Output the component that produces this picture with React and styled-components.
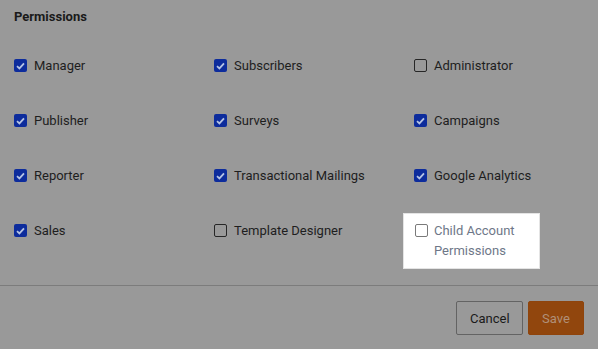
import React from "react";
import styled, { createGlobalStyle } from "styled-components";

const Global = createGlobalStyle`
  html, body { margin: 0; padding: 0; background: #999999; }
  body { font-family: Roboto, "Liberation Sans", sans-serif; color: #1c1c1c; }
`;

const Page = styled.div`
  width: 598px;
  height: 349px;
  display: flex;
  flex-direction: column;
  background: #999999;
  overflow: hidden;
`;

const Title = styled.h3`
  margin: 0;
  padding: 9px 14px 0;
  font-size: 13px;
  font-weight: 700;
  line-height: 16px;
  color: #1a1a1a;
`;

const Grid = styled.div`
  display: grid;
  grid-template-columns: 200px 200px 184px;
  grid-auto-rows: 55px;
  padding: 33px 0 0 14px;
`;

const Cell = styled.div`
  display: flex;
  align-items: flex-start;
`;

const Spot = styled.div`
  margin: -10px 0 0 -11px;
  padding: 9px 10px 7px 11px;
  width: 114px;
  background: #ffffff;
  border: 1px solid #e4e4e4;
  display: flex;
  align-items: flex-start;
  align-self: flex-start;
`;

const Box = styled.span`
  flex: none;
  width: 13px;
  height: 13px;
  box-sizing: border-box;
  margin-top: 1px;
  margin-right: ${(p) => (p.$light ? "6px" : "7px")};
  border-radius: 2px;
  display: flex;
  align-items: center;
  justify-content: center;
  background: ${(p) => (p.$checked ? "#0d2c9c" : "transparent")};
  border: ${(p) => (p.$checked ? "none" : `1px solid ${p.$light ? "#7a7a7a" : "#262626"}`)};
`;

const Label = styled.span`
  font-size: 13px;
  line-height: 16px;
  color: ${(p) => (p.$muted ? "#6e7788" : "#1e1e1e")};
  ${(p) => p.$muted && "line-height: 20px; margin-top: -2px;"}
`;

const Divider = styled.hr`
  margin: 0;
  margin-top: auto;
  border: none;
  border-top: 1px solid #7c7c7c;
`;

const Footer = styled.div`
  display: flex;
  justify-content: flex-end;
  gap: 5px;
  padding: 15px 14px 14px;
`;

const Button = styled.button`
  height: 34px;
  padding: 0 13px;
  font-family: inherit;
  font-size: 13px;
  border-radius: 2px;
  border: 1px solid ${(p) => (p.$primary ? "#8f440c" : "#636363")};
  background: ${(p) => (p.$primary ? "#91460d" : "transparent")};
  color: ${(p) => (p.$primary ? "#b09078" : "#1a1a1a")};
  width: ${(p) => p.$w}px;
`;

const Check = () => (
  <svg width="9" height="8" viewBox="0 0 9 8">
    <path d="M1 4.2 L3.4 6.4 L8 1.4" stroke="#b5c3e4" strokeWidth="1.8" fill="none" />
  </svg>
);

const items = [
  ["Manager", true], ["Subscribers", true], ["Administrator", false],
  ["Publisher", true], ["Surveys", true], ["Campaigns", true],
  ["Reporter", true], ["Transactional Mailings", true], ["Google Analytics", true],
  ["Sales", true], ["Template Designer", false],
];

export default function App() {
  return (
    <Page>
      <Global />
      <Title>Permissions</Title>
      <Grid>
        {items.map(([name, c]) => (
          <Cell key={name}>
            <Box $checked={c}>{c && <Check />}</Box>
            <Label>{name}</Label>
          </Cell>
        ))}
        <Cell>
          <Spot>
            <Box $light />
            <Label $muted>Child Account Permissions</Label>
          </Spot>
        </Cell>
      </Grid>
      <Divider />
      <Footer>
        <Button $w={67}>Cancel</Button>
        <Button $primary $w={56}>Save</Button>
      </Footer>
    </Page>
  );
}
